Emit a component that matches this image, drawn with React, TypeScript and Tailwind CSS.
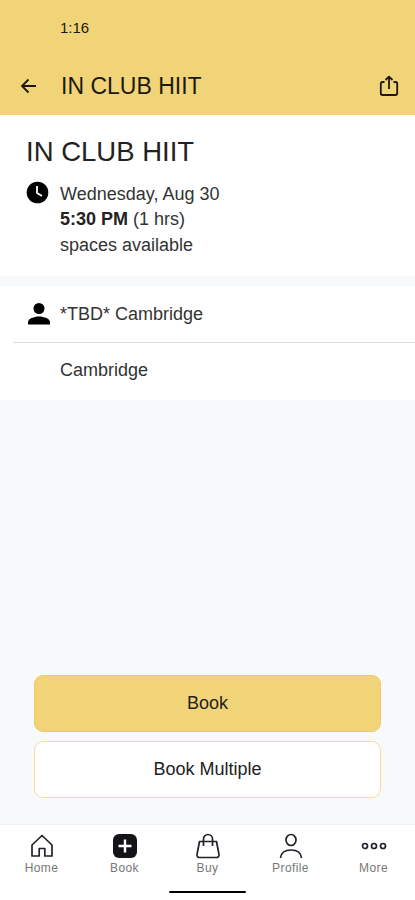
import type { ReactNode } from "react";

function NavItem({ label, children }: { label: string; children: ReactNode }) {
  return (
    <button className="flex flex-1 flex-col items-center pt-[7px]">
      <svg width="28" height="28" viewBox="0 0 28 28" fill="none" stroke="#22222c" strokeWidth="1.7" strokeLinejoin="round">
        {children}
      </svg>
      <span className="mt-px text-[12px] leading-[15px] tracking-[0.4px] text-[#777]">{label}</span>
    </button>
  );
}

export default function App() {
  return (
    <div className="flex h-[900px] w-full flex-col bg-[#f8f9fb] font-['Liberation_Sans',Arial,sans-serif] text-[#222]">
      <header className="h-[115px] bg-[#f2d478] text-[#1c180c]">
        <div className="pt-[18px] pl-[60px] text-[15px] leading-5">1:16</div>
        <div className="mt-[33px] flex h-[30px] items-center pl-[19px] pr-[15px]">
          <svg width="20" height="20" viewBox="0 0 20 20" fill="none" stroke="currentColor" strokeWidth="1.8">
            <path d="M17 10H3M9.5 3.5L3 10l6.500 6.500" />
          </svg>
          <h1 className="ml-[22px] flex-1 text-[23px] leading-[30px]">IN CLUB HIIT</h1>
          <svg width="22" height="24" viewBox="0 0 22 24" fill="none" stroke="currentColor" strokeWidth="1.8" strokeLinejoin="round">
            <path d="M6.500 8H4.500a1.700 1.700 0 0 0-1.700 1.700v9.600A1.700 1.700 0 0 0 4.500 21h13a1.700 1.700 0 0 0 1.700-1.700V9.700A1.700 1.700 0 0 0 17.500 8h-2" />
            <path d="M11 15V3M7.500 6L11 2.700 14.500 6" />
          </svg>
        </div>
      </header>

      <section className="h-[161px] bg-white pt-[20px] pl-[26px]">
        <h2 className="text-[27.500px] leading-[34px]">IN CLUB HIIT</h2>
        <div className="mt-[13px] flex">
          <svg className="-mt-px" width="23" height="23" viewBox="0 0 23 23">
            <circle cx="11.500" cy="11.500" r="10.800" fill="#000" />
            <path d="M11 5v7l5 3" fill="none" stroke="#fff" strokeWidth="1.800" />
          </svg>
          <div className="ml-[11px] text-[18px] leading-[25.400px] text-[#333]">
            <p>Wednesday, Aug 30</p>
            <p>
              <b className="text-[#222]">5:30 PM</b> (1 hrs)
            </p>
            <p>spaces available</p>
          </div>
        </div>
      </section>

      <section className="mt-[10px] h-[114px] bg-white text-[18px] text-[#333]">
        <div className="ml-[13px] flex h-[57px] items-center border-b border-[#dedede] pl-[14px]">
          <svg width="24" height="24" viewBox="0 0 24 24" fill="#000">
            <circle cx="12" cy="6.500" r="5.500" />
            <path d="M1 22.500v-2.300C1 16.700 7 14.500 12 14.500s11 2.200 11 5.700v2.300z" />
          </svg>
          <span className="ml-[9px]">*TBD* Cambridge</span>
        </div>
        <div className="flex h-[55px] items-center pl-[60px]">Cambridge</div>
      </section>

      <div className="mt-auto flex flex-col gap-[9px] px-[34px] pb-[26px] text-[18px]">
        <button className="h-[57px] rounded-[9px] border border-[#efca67] bg-[#f2d478]">Book</button>
        <button className="h-[57px] rounded-[9px] border border-[#f3dc98] bg-white">Book Multiple</button>
      </div>

      <nav className="h-[76px] border-t border-[#f1f2f4] bg-white">
        <div className="flex">
          <NavItem label="Home">
            <path d="M4 13L14 3.500 24 13v11h-7.200v-7.500h-5.600V24H4z" />
          </NavItem>
          <NavItem label="Book">
            <rect x="2" y="2" width="24" height="24" rx="6" fill="#141418" stroke="none" />
            <path d="M14 7.500v13M7.500 14h13" stroke="#fff" strokeWidth="2.400" />
          </NavItem>
          <NavItem label="Buy">
            <path d="M5.500 9.500h17L25 22.500a2.500 2.500 0 0 1-2.500 3h-17a2.500 2.500 0 0 1-2.500-3z" />
            <path d="M9.500 14V7a4.500 4.500 0 0 1 9 0v7" />
          </NavItem>
          <NavItem label="Profile">
            <ellipse cx="14" cy="8" rx="5" ry="5.500" />
            <path d="M3.500 26c.5-5 4.500-8 10.500-8s10 3 10.500 8" />
          </NavItem>
          <NavItem label="More">
            <circle cx="5" cy="14" r="2.500" />
            <circle cx="14" cy="14" r="2.500" />
            <circle cx="23" cy="14" r="2.500" />
          </NavItem>
        </div>
        <div className="mx-auto mt-[15px] h-[2px] w-[77px] rounded-full bg-black" />
      </nav>
    </div>
  );
}
